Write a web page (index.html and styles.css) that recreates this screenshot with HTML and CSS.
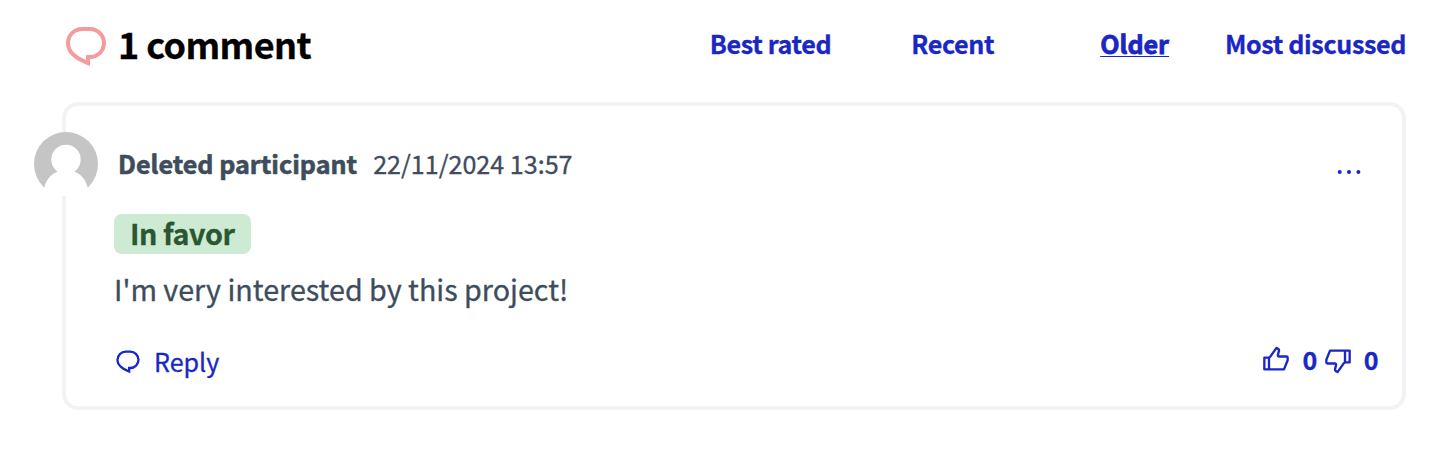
FILE: index.html
```
<!DOCTYPE html>
<html lang="en">
<head>
<meta charset="utf-8">
<title>Comments</title>
<link rel="stylesheet" href="styles.css">
</head>
<body>
<svg width="0" height="0" class="defs">
  <symbol id="chat" viewBox="0 0 24 24"><path d="M10 3h4a8 8 0 1 1 0 16v3.5c-5-2-12-5-12-11.5a8 8 0 0 1 8-8zm2 14h2a6 6 0 1 0 0-12h-4a6 6 0 0 0-6 6c0 3.61 2.462 5.966 8 8.48V17z"/></symbol>
  <symbol id="thumb" viewBox="0 0 24 24"><path d="M14.6 8H21a2 2 0 0 1 2 2v2.104a2 2 0 0 1-.15.762l-3.095 7.515a1 1 0 0 1-.925.619H2a1 1 0 0 1-1-1V10a1 1 0 0 1 1-1h3.482a1 1 0 0 0 .817-.423L11.752.85a.5.5 0 0 1 .632-.159l1.814.907a2.5 2.5 0 0 1 1.305 2.853L14.6 8zM7 10.588V19h11.16L21 12.104V10h-6.4a2 2 0 0 1-1.938-2.493l.903-3.548a.5.5 0 0 0-.261-.571l-.661-.33-4.71 6.672c-.25.354-.57.644-.933.858zM5 11H3v8h2v-8z"/></symbol>
</svg>
<section class="comments">
  <header class="top">
    <svg class="title-icon"><use href="#chat"/></svg>
    <h2 class="title">1 comment</h2>
    <nav class="sort">
      <a class="best">Best rated</a>
      <a class="recent">Recent</a>
      <a class="older">Older</a>
      <a class="most">Most discussed</a>
    </nav>
  </header>
  <article class="card">
    <div class="meta">
      <svg class="avatar" viewBox="0 0 64 64">
        <rect width="64" height="64" fill="#fff"/>
        <circle cx="32" cy="32" r="32" fill="#c5c5c5"/>
        <circle cx="32" cy="27.5" r="14.7" fill="#fff"/>
        <path d="M10.3 55.5C12 48 17 42 24.5 39.3H39.5C47 42 52 48 53.7 55.5L64 55V64H0V55Z" fill="#fff"/>
      </svg>
      <span class="author">Deleted participant</span>
      <time class="date">22/11/2024 13:57</time>
      <svg class="more" viewBox="0 0 24 6"><circle cx="2.7" cy="3" r="2"/><circle cx="12" cy="3" r="2"/><circle cx="21.4" cy="3" r="2"/></svg>
    </div>
    <div class="badge"><span>In favor</span></div>
    <p class="text">I'm very interested by this project!</p>
    <footer class="actions">
      <svg class="icon"><use href="#chat"/></svg>
      <a class="reply">Reply</a>
      <div class="votes">
        <svg class="icon"><use href="#thumb"/></svg>
        <span class="up-count">0</span>
        <svg class="icon down"><use href="#thumb"/></svg>
        <span class="down-count">0</span>
      </div>
    </footer>
  </article>
</section>
</body>
</html>
```
FILE: styles.css
```
* { box-sizing: border-box; }
body {
  margin: 0;
  background: #fff;
  color: #3e4c5c;
  font-family: "Noto Sans CJK SC", "Noto Sans", sans-serif;
  font-size: 25.1px;
  line-height: 36px;
  white-space: nowrap;
  -webkit-text-stroke: 0.3px currentColor;
}
.defs { display: block; height: 0; }
.comments { padding: 20px 32px 0 62px; }
.top { display: flex; height: 82px; align-items: flex-start; }
.title-icon { width: 48px; height: 48px; fill: #f39c9b; flex: none; margin-top: 1px; }
.title {
  margin: 0 0 0 8px;
  color: #000;
  font-size: 36px;
  font-weight: 600;
  line-height: 46px;
  letter-spacing: -0.6px;
}
.sort { display: flex; margin-left: auto; color: #1a27c4; font-weight: 600; line-height: 46px; letter-spacing: -0.37px; }
.recent { margin-left: 80px; }
.older { margin-left: 106px; font-weight: 700; letter-spacing: 0; text-decoration: underline; text-decoration-thickness: 1px; text-underline-offset: 2px; -webkit-text-stroke-width: 0.8px; }
.most { margin-left: 56px; }
.card { height: 308px; border: 4px solid #f2f3f7; border-radius: 16px; padding: 26px 24px 0 48px; }
.meta { display: flex; height: 64px; margin-left: -80px; }
.avatar { width: 64px; height: 64px; flex: none; }
.author { font-weight: 700; line-height: 62px; margin-left: 20px; -webkit-text-stroke-width: 0.6px; }
.date { line-height: 62px; margin-left: 16px; }
.more { width: 24px; height: 6px; margin: 37px 17px 0 auto; fill: #1a27c4; }
.badge {
  display: block;
  width: 137px;
  height: 40px;
  margin-top: 18px;
  padding-left: 16px;
  border-radius: 8px;
  background: #cdebd3;
  color: #2a5731;
  font-size: 28.7px;
  font-weight: 600;
  line-height: 37px;
  letter-spacing: -0.45px;
}
.text { margin: 15px 0 0; font-size: 28.7px; line-height: 40px; }
.actions { display: flex; margin-top: 34px; color: #1a27c4; }
.icon { width: 28px; height: 28px; flex: none; fill: #1a27c4; margin-top: 4px; }
.reply { margin-left: 12px; }
.votes { display: flex; margin-left: auto; font-weight: 600; line-height: 32px; letter-spacing: -0.5px; }
.votes .icon { margin-top: 3px; }
.down { transform: rotate(180deg); }
.up-count { margin: 0 7px 0 12px; }
.down-count { margin-left: 12px; }
```
